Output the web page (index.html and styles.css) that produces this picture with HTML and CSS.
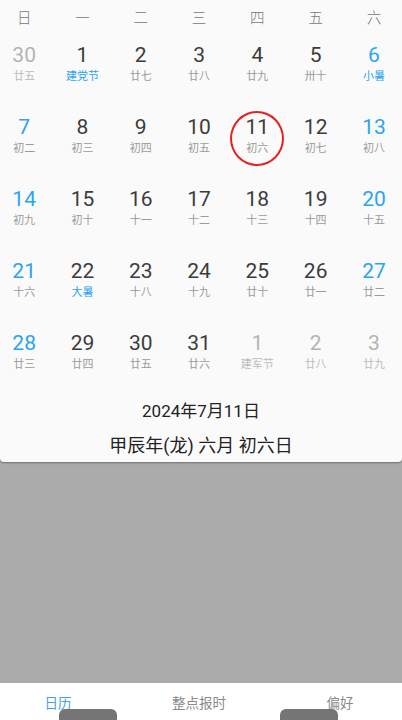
FILE: index.html
```html
<!DOCTYPE html>
<html lang="zh">
<head>
    <meta charset="UTF-8">
    <meta name="viewport" content="width=device-width, initial-scale=1.0">
    <title>日历</title>
    <link rel="stylesheet" href="styles.css">
</head>
<body>

<div class="app">
    <div class="calendar-card">
        <div class="week-head">
            <span>日</span><span>一</span><span>二</span><span>三</span><span>四</span><span>五</span><span>六</span>
        </div>
        <div id="daysGrid" class="days-grid"></div>

        <div class="today-info">
            <div class="solar-date">2024年7月11日</div>
            <div class="lunar-date">甲辰年(龙) 六月 初六日</div>
        </div>
    </div>

    <div class="blank-area"></div>

    <nav class="tab-bar">
        <span class="tab active">日历</span>
        <span class="tab">整点报时</span>
        <span class="tab">偏好</span>
        <div class="nav-pill left"></div>
        <div class="nav-pill right"></div>
    </nav>
</div>

<script>
    const daysGrid = document.getElementById('daysGrid');

    // [day, lunar, type] type: o = other month, f = festival
    const days = [
        [30, '廿五', 'o'], [1, '建党节', 'f'], [2, '廿七'], [3, '廿八'], [4, '廿九'], [5, '卅十'], [6, '小暑', 'f'],
        [7, '初二'], [8, '初三'], [9, '初四'], [10, '初五'], [11, '初六', 'today'], [12, '初七'], [13, '初八'],
        [14, '初九'], [15, '初十'], [16, '十一'], [17, '十二'], [18, '十三'], [19, '十四'], [20, '十五'],
        [21, '十六'], [22, '大暑', 'f'], [23, '十八'], [24, '十九'], [25, '廿十'], [26, '廿一'], [27, '廿二'],
        [28, '廿三'], [29, '廿四'], [30, '廿五'], [31, '廿六'], [1, '建军节', 'o'], [2, '廿八', 'o'], [3, '廿九', 'o']
    ];

    days.forEach((d, i) => {
        const cell = document.createElement('div');
        cell.className = 'day';
        const col = i % 7;
        if (d[2] === 'o') {
            cell.classList.add('other');
        } else if (col === 0 || col === 6) {
            cell.classList.add('weekend');
        }
        if (d[2] === 'f') cell.classList.add('festival');
        if (d[2] === 'today') cell.classList.add('today');
        cell.innerHTML = `<span class="num">${d[0]}</span><span class="lunar">${d[1]}</span>`;
        daysGrid.appendChild(cell);
    });
</script>

</body>
</html>
```

FILE: styles.css
```css
body {
    margin: 0;
    font-family: Roboto, "Noto Sans CJK SC", sans-serif;
    background-color: #acabab;
    overflow: hidden;
}
.app {
    width: 402px;
    height: 720px;
    display: flex;
    flex-direction: column;
}
.calendar-card {
    height: 462px;
    background-color: #fafafa;
    border-radius: 0 0 4px 4px;
    box-shadow: 0 1px 2px rgba(0, 0, 0, 0.35);
    overflow: hidden;
    position: relative;
    z-index: 1;
}
.week-head, .days-grid {
    display: grid;
    grid-template-columns: repeat(7, 58.3px);
    margin-left: -5px;
}
.week-head {
    height: 32px;
    align-items: center;
}
.week-head span {
    text-align: center;
    font-size: 14.5px;
    color: #777;
    font-family: "Noto Sans CJK SC", sans-serif;
    font-weight: 300;
}
.day {
    height: 72px;
    display: flex;
    flex-direction: column;
    align-items: center;
    position: relative;
}
.day .num {
    font-size: 21px;
    color: #3c3c3c;
    margin-top: 9px;
    line-height: 28px;
}
.day .lunar {
    font-size: 11px;
    color: #9a9a9a;
    line-height: 14px;
    margin-top: 1px;
}
.day.weekend .num {
    color: #2aa5ee;
}
.day.festival .lunar {
    color: #2aa5ee;
}
.day.other .num {
    color: #b4b4b4;
}
.day.other .lunar {
    color: #bcbcbc;
}
.day.today::before {
    content: "";
    position: absolute;
    left: 2px;
    top: 7px;
    width: 50px;
    height: 51px;
    border: 2px solid #e3221f;
    border-radius: 50%;
}
.today-info {
    text-align: center;
    color: #222;
    padding-top: 8px;
}
.solar-date {
    font-size: 17px;
    line-height: 22px;
}
.lunar-date {
    font-size: 18px;
    line-height: 24px;
    margin-top: 12px;
}
.blank-area {
    flex: 1;
}
.tab-bar {
    height: 37px;
    background-color: #fff;
    display: flex;
    justify-content: center;
    padding-right: 4px;
    position: relative;
}
.tab {
    width: 141px;
    flex-shrink: 0;
    text-align: center;
    font-size: 13.5px;
    color: #8a8a8a;
    padding-top: 9px;
    font-family: "Noto Sans CJK SC", sans-serif;
}
.tab.active {
    color: #4a9ee8;
}
.nav-pill {
    position: absolute;
    bottom: 0;
    width: 58px;
    height: 11px;
    background-color: #757575;
    border-radius: 6px 6px 0 0;
}
.nav-pill.left {
    left: 59px;
}
.nav-pill.right {
    left: 280px;
}
```
